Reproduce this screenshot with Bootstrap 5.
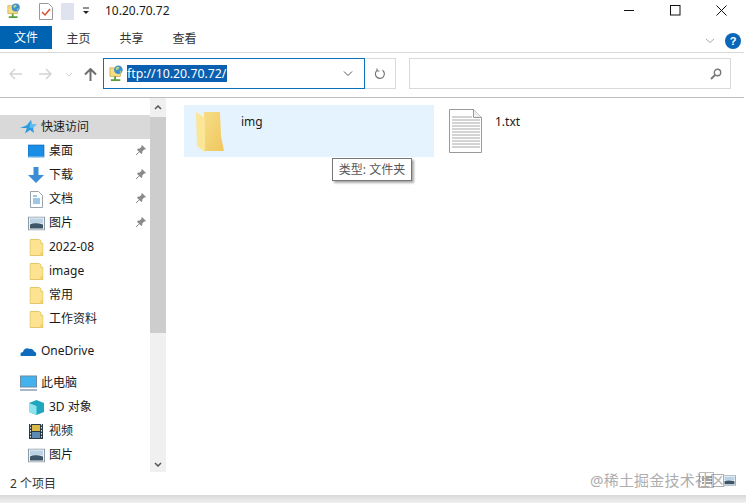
<!DOCTYPE html>
<html lang="zh-CN">
<head>
  <meta charset="UTF-8">
  <meta name="viewport" content="width=device-width, initial-scale=1.0">
  <title>10.20.70.72</title>
  <link href="https://cdn.jsdelivr.net/npm/bootstrap@5.3.0/dist/css/bootstrap.min.css" rel="stylesheet">
  <style>
    html, body { height: 100%; }
    body { overflow: hidden; background: #fff; color: #1a1a1a; font-family: "Noto Sans", "Noto Sans CJK SC", sans-serif; font-size: 12px; line-height: 16px; }
    .shell { width: 746px; height: 503px; position: relative; overflow: hidden; background: linear-gradient(#d9d9d9, #f0f0f0) bottom / 100% 8px no-repeat; }
    .frame { height: 495px; background: #fff; }
    .titlebar { height: 26px; padding: 0 2px 4px 7px; }
    .titlebar svg { display: block; }
    .win-title { margin-left: 15px; font-size: 12px; }
    .win-btns { margin-left: auto; align-self: flex-start; }
    .win-btn { width: 46px; height: 20px; display: flex; align-items: center; justify-content: center; }
    .tabs { height: 27px; border-bottom: 1px solid #d9d9d9; margin-right: 2px; }
    .tab-file { width: 52px; height: 23px; background: #0063b1; color: #fff; display: flex; align-items: center; justify-content: center; }
    .tab-item { width: 53px; height: 23px; display: flex; align-items: center; justify-content: center; color: #333; padding-top: 2px; }
    .tab-end { margin-left: auto; padding: 3px 3px 0 0; height: 26px; gap: 10px; }
    .addr-row { height: 45px; padding: 5px 0 0 8px; border-bottom: 1px solid #bdbdbd; margin-right: 2px; }
    .nav-arrows { width: 95px; height: 32px; padding-left: 1px; }
    .addr-box { width: 262px; height: 31px; border: 1px solid #0a72b8; padding: 0 11px 0 5px; }
    .addr-sel { background: #0a5fb0; color: #fff; font-size: 12.3px; line-height: 17px; margin-left: 3px; padding-right: 1px; }
    .refresh-box { width: 31px; height: 31px; border: 1px solid #d9d9d9; border-left: 0; }
    .search-box { width: 322px; height: 31px; margin-left: 13px; border: 1px solid #d9d9d9; padding-right: 8px; }
    .main-area { height: 374px; }
    .side-nav { width: 150px; padding-top: 17px; overflow: hidden; flex: none; }
    .nav-row { height: 24px; display: flex; align-items: center; flex: none; color: #1a1a1a; position: relative; }
    .nav-row.sel { background: #d9d9d9; }
    .lvl1 { padding-left: 20px; }
    .lvl2 { padding-left: 28px; }
    .nav-ico { width: 17px; height: 17px; margin-right: 4px; flex: none; }
    .pin-ico { position: absolute; left: 135px; top: 5px; }
    .gap-row { height: 8px; flex: none; }
    .side-scroll { width: 16px; background: #f0f0f0; flex: none; display: flex; flex-direction: column; }
    .scroll-btn { height: 16px; display: flex; align-items: center; justify-content: center; flex: none; }
    .scroll-top { height: 19px; }
    .scroll-thumb { height: 216px; background: #cdcdcd; flex: none; }
    .scroll-rest { flex: 1; }
    .file-pane { padding: 7px 0 0 18px; flex: 1; }
    .file-tile { height: 52px; display: flex; align-items: flex-start; }
    .tile-folder { width: 250px; background: #e5f3ff; padding: 6px 0 0 12px; }
    .tile-file { width: 200px; padding: 4px 0 0 15px; }
    .tile-name { margin-left: 16px; padding-top: 3px; }
    .tile-txt { margin-left: 13px; padding-top: 5px; }
    .tip-box { position: absolute; left: 332px; top: 158px; height: 23px; width: 80px; background: #fff; border: 1px solid #767676; box-shadow: 2px 2px 2px #aaa; color: #575757; display: flex; align-items: center; justify-content: center; white-space: nowrap; }
    .status-line { height: 23px; padding-left: 10px; color: #333; }
    .mark-txt { position: absolute; left: 590px; top: 470px; font-size: 15px; line-height: 20px; color: #a0a0a0; opacity: .85; white-space: nowrap; letter-spacing: .2px; }
    .view-btns { position: absolute; left: 699px; top: 472px; gap: 9px; }
  </style>
</head>
<body>
  <svg width="0" height="0" class="position-absolute">
    <defs>
      <linearGradient id="g-folder" x1="0" y1="0" x2="1" y2="1">
        <stop offset="0" stop-color="#f7dd86"/>
        <stop offset="1" stop-color="#efc65e"/>
      </linearGradient>
      <symbol id="i-net" viewBox="0 0 16 18">
        <rect x="1" y="3" width="11" height="9" fill="#f6dc84" stroke="#c9a93e" stroke-width=".8"/>
        <path d="M6.500 12v3M2 16h10" stroke="#5a9e3a" stroke-width="2"/>
        <circle cx="10" cy="5" r="4.600" fill="#3f8fd0"/>
        <path d="M7 3c2-2 4-1 4 0s-2 2-3 3zM11 7c1-1 2-1 2.500-1l-1 2.500z" fill="#a5d68c"/>
      </symbol>
      <symbol id="i-folder" viewBox="0 0 14 17">
        <path d="M.5.500h9l2 1.500v2.500h2v12H.5z" fill="#fde38f" stroke="#e2c76a"/>
        <path d="M11 13h2.500v3.500H11z" fill="#f4cf68"/>
      </symbol>
      <symbol id="i-pin" viewBox="0 0 12 12">
        <path d="M7 1l4 4-1 .6-.7-.2L7.400 7.300l-.2 2-1 .7L2 5.800l.7-1 2-.2L6.600 2.700l-.2-.7z" fill="#8a8a8a"/>
        <path d="M3.800 8.200L1 11" stroke="#8a8a8a"/>
      </symbol>
      <symbol id="i-pic" viewBox="0 0 17 14">
        <rect x=".5" y=".5" width="16" height="13" fill="#eef3f7" stroke="#8d9aa6"/>
        <path d="M2 2h13v5H2z" fill="#bcd3e6"/>
        <path d="M2 8c4-2 8-1 13 0v4H2z" fill="#3d5566"/>
      </symbol>
    </defs>
  </svg>

  <div class="shell">
    <div class="frame d-flex flex-column">

      <div class="titlebar d-flex align-items-center">
        <svg width="14" height="16"><use href="#i-net"/></svg>
        <svg width="14" height="17" viewBox="0 0 14 17" style="margin-left:18px">
          <path d="M.5.500h9l4 4v12H.5z" fill="#fff" stroke="#999"/>
          <path d="M3 9l3 3 5-6" fill="none" stroke="#d9502e" stroke-width="1.500"/>
        </svg>
        <svg width="13" height="17" viewBox="0 0 13 17" style="margin-left:8px"><rect width="13" height="17" fill="#dfe3ef"/></svg>
        <svg class="ms-2" width="8" height="8" viewBox="0 0 8 8"><path d="M1 1h6" stroke="#222"/><path d="M1 4h6L4 7z" fill="#222"/></svg>
        <span class="win-title">10.20.70.72</span>
        <div class="win-btns d-flex">
          <div class="win-btn"><svg width="11" height="11"><path d="M0 5.500h10" stroke="#111"/></svg></div>
          <div class="win-btn"><svg width="11" height="11"><rect x=".5" y=".5" width="9.500" height="9.500" fill="none" stroke="#111"/></svg></div>
          <div class="win-btn"><svg width="11" height="11"><path d="M.5.500l10 10M10.500.500l-10 10" stroke="#111"/></svg></div>
        </div>
      </div>

      <div class="tabs d-flex align-items-start">
        <div class="tab-file">文件</div>
        <div class="tab-item">主页</div>
        <div class="tab-item">共享</div>
        <div class="tab-item">查看</div>
        <div class="tab-end d-flex align-items-center">
          <svg width="10" height="6" viewBox="0 0 10 6"><path d="M1 1l4 3.500L9 1" fill="none" stroke="#aaa"/></svg>
          <svg width="16" height="16" viewBox="0 0 16 16">
            <circle cx="8" cy="8" r="8" fill="#0a66b8"/>
            <text x="8" y="12" text-anchor="middle" font-size="11" font-weight="700" fill="#fff" font-family="Liberation Sans">?</text>
          </svg>
        </div>
      </div>

      <div class="addr-row d-flex align-items-start">
        <div class="nav-arrows d-flex align-items-center">
          <svg width="13" height="12" viewBox="0 0 13 12"><path d="M6 1L1 6l5 5M1 6h12" fill="none" stroke="#d4d4d4" stroke-width="1.500"/></svg>
          <svg width="13" height="12" viewBox="0 0 13 12" style="margin-left:17px"><path d="M7 1l5 5-5 5M12 6H0" fill="none" stroke="#d4d4d4" stroke-width="1.500"/></svg>
          <svg width="8" height="5" viewBox="0 0 8 5" style="margin-left:13px"><path d="M1 1l3 3 3-3" fill="none" stroke="#d4d4d4"/></svg>
          <svg width="13" height="13" viewBox="0 0 13 13" style="margin-left:11px"><path d="M1 6.500l5.500-5.500 5.500 5.500M6.500 1.500V13" fill="none" stroke="#6e6e6e" stroke-width="2"/></svg>
        </div>
        <div class="addr-box d-flex align-items-center">
          <svg width="15" height="17"><use href="#i-net"/></svg>
          <span class="addr-sel">ftp://10.20.70.72/</span>
          <svg class="ms-auto" width="10" height="6" viewBox="0 0 10 6"><path d="M1 .500l4 4 4-4" fill="none" stroke="#555"/></svg>
        </div>
        <div class="refresh-box d-flex align-items-center justify-content-center">
          <svg width="12" height="12" viewBox="0 0 12 12"><path d="M8.500 2.200A4.500 4.500 0 1 1 3 2.400M3 .500v2.500h2.500" fill="none" stroke="#777" stroke-width="1.200"/></svg>
        </div>
        <div class="search-box d-flex align-items-center justify-content-end">
          <svg width="12" height="12" viewBox="0 0 12 12"><circle cx="7.500" cy="4.500" r="3.200" fill="none" stroke="#777" stroke-width="1.400"/><path d="M5 7l-4 4" stroke="#777" stroke-width="1.800"/></svg>
        </div>
      </div>

      <div class="main-area d-flex">
        <div class="side-nav d-flex flex-column">
          <div class="nav-row sel lvl1">
            <svg class="nav-ico" viewBox="0 0 17 17"><path d="M11 1l1 4.500h4.500l-3.500 3 1 5.500-4-3-5 3.500 1.800-5.500L0 9l6.800-2.800z" fill="#2b9be0"/><path d="M11 1l1 4.500h4.500l-3.500 3-3.500.5z" fill="#5cc0f2"/></svg>
            <span>快速访问</span>
          </div>
          <div class="nav-row lvl2">
            <svg class="nav-ico" viewBox="0 0 17 17"><rect y="2" width="16" height="12" fill="#1a8ee6" stroke="#0d5fa5" stroke-width=".6"/><path d="M0 14h16" stroke="#a9d6f5"/></svg>
            <span>桌面</span>
            <svg class="pin-ico" width="12" height="12"><use href="#i-pin"/></svg>
          </div>
          <div class="nav-row lvl2">
            <svg class="nav-ico" viewBox="0 0 17 17"><path d="M5.500 0h5v8H16l-8 8-8-8h5.500z" fill="#3b8ed6"/></svg>
            <span>下载</span>
            <svg class="pin-ico" width="12" height="12"><use href="#i-pin"/></svg>
          </div>
          <div class="nav-row lvl2">
            <svg class="nav-ico" viewBox="0 0 17 17"><path d="M2.500.500h8l4 4v12h-12z" fill="#fff" stroke="#9aa3aa"/><path d="M5 5h4M5 8h7M5 10h7M5 12h7" stroke="#3d8fc7"/></svg>
            <span>文档</span>
            <svg class="pin-ico" width="12" height="12"><use href="#i-pin"/></svg>
          </div>
          <div class="nav-row lvl2">
            <svg class="nav-ico" viewBox="0 0 17 14"><use href="#i-pic"/></svg>
            <span>图片</span>
            <svg class="pin-ico" width="12" height="12"><use href="#i-pin"/></svg>
          </div>
          <div class="nav-row lvl2">
            <svg class="nav-ico" viewBox="0 0 14 17"><use href="#i-folder"/></svg>
            <span>2022-08</span>
          </div>
          <div class="nav-row lvl2">
            <svg class="nav-ico" viewBox="0 0 14 17"><use href="#i-folder"/></svg>
            <span>image</span>
          </div>
          <div class="nav-row lvl2">
            <svg class="nav-ico" viewBox="0 0 14 17"><use href="#i-folder"/></svg>
            <span>常用</span>
          </div>
          <div class="nav-row lvl2">
            <svg class="nav-ico" viewBox="0 0 14 17"><use href="#i-folder"/></svg>
            <span>工作资料</span>
          </div>
          <div class="gap-row"></div>
          <div class="nav-row lvl1">
            <svg class="nav-ico" viewBox="0 0 17 17"><path d="M1 13c-1.500-2 0-4 2-4 .5-3 4-5 6.500-3 2-.5 4 .5 4.500 2.500 2 0 3 3 1.500 4.500z" fill="#0f6cbd"/></svg>
            <span>OneDrive</span>
          </div>
          <div class="gap-row"></div>
          <div class="nav-row lvl1">
            <svg class="nav-ico" viewBox="0 0 17 17"><rect x=".5" y="1" width="16" height="11" fill="#43b2f0" stroke="#6d8ba1"/><path d="M0 15h17" stroke="#8aa0b0" stroke-width="1.500"/></svg>
            <span>此电脑</span>
          </div>
          <div class="nav-row lvl2">
            <svg class="nav-ico" viewBox="0 0 17 17"><path d="M8.500 1L16 4v9l-7.500 3L1 13V4z" fill="#1fa7bf"/><path d="M1 4l7.500 3v9L1 13z" fill="#8fe3ec"/></svg>
            <span>3D 对象</span>
          </div>
          <div class="nav-row lvl2">
            <svg class="nav-ico" viewBox="0 0 17 17"><rect x="1" y="1" width="14" height="15" fill="#2c3a44"/><rect x="4" y="2" width="8" height="6" fill="#d8b84a"/><rect x="4" y="9" width="8" height="6" fill="#5c8ab0"/><path d="M2.500 1v15M13.500 1v15" stroke="#e8e8e8" stroke-dasharray="1.500 1.500"/></svg>
            <span>视频</span>
          </div>
          <div class="nav-row lvl2">
            <svg class="nav-ico" viewBox="0 0 17 14"><use href="#i-pic"/></svg>
            <span>图片</span>
          </div>
          <div class="nav-row lvl2">
            <svg class="nav-ico" viewBox="0 0 17 14"><use href="#i-pic"/></svg>
          </div>
        </div>

        <div class="side-scroll">
          <div class="scroll-btn scroll-top"><svg width="8" height="5" viewBox="0 0 8 5"><path d="M1 4l3-3 3 3" fill="none" stroke="#555" stroke-width="1.500"/></svg></div>
          <div class="scroll-thumb"></div>
          <div class="scroll-rest"></div>
          <div class="scroll-btn"><svg width="8" height="5" viewBox="0 0 8 5"><path d="M1 1l3 3 3-3" fill="none" stroke="#555" stroke-width="1.500"/></svg></div>
        </div>

        <div class="file-pane d-flex align-items-start">
          <div class="file-tile tile-folder">
            <svg width="29" height="42" viewBox="0 0 29 42">
              <path d="M8 1h16l1 24 3 15H8z" fill="url(#g-folder)"/>
              <path d="M0 1l9 6v34l-8-6z" fill="#fbe596"/>
            </svg>
            <span class="tile-name">img</span>
          </div>
          <div class="file-tile tile-file">
            <svg width="33" height="44" viewBox="0 0 33 44">
              <path d="M.5.500h24l8 8v35H.5z" fill="#fff" stroke="#9a9a9a"/>
              <path d="M24.500.500v8h8" fill="#eee" stroke="#9a9a9a"/>
              <path d="M3 8h20M3 11h28M3 14h28M3 17h28M3 20h28M3 23h28M3 26h28M3 29h28M3 32h28M3 35h28M3 38h28" stroke="#a8a8a8"/>
            </svg>
            <span class="tile-txt">1.txt</span>
          </div>
        </div>
      </div>

      <div class="status-line d-flex align-items-center">2 个项目</div>
    </div>

    <div class="tip-box">类型: 文件夹</div>
    <div class="mark-txt">@稀土掘金技术社区</div>
    <div class="view-btns d-flex align-items-center">
      <svg width="15" height="16" viewBox="0 0 15 16"><rect x=".5" y=".5" width="14" height="15" fill="none" stroke="#777" stroke-dasharray="1 1"/><path d="M3 5h2M7 5h6M3 8h2M7 8h6M3 11h2M7 11h6" stroke="#444"/></svg>
      <svg width="13" height="11" viewBox="0 0 17 14"><use href="#i-pic"/></svg>
    </div>
  </div>

  <script src="https://cdn.jsdelivr.net/npm/bootstrap@5.3.0/dist/js/bootstrap.bundle.min.js"></script>
</body>
</html>
